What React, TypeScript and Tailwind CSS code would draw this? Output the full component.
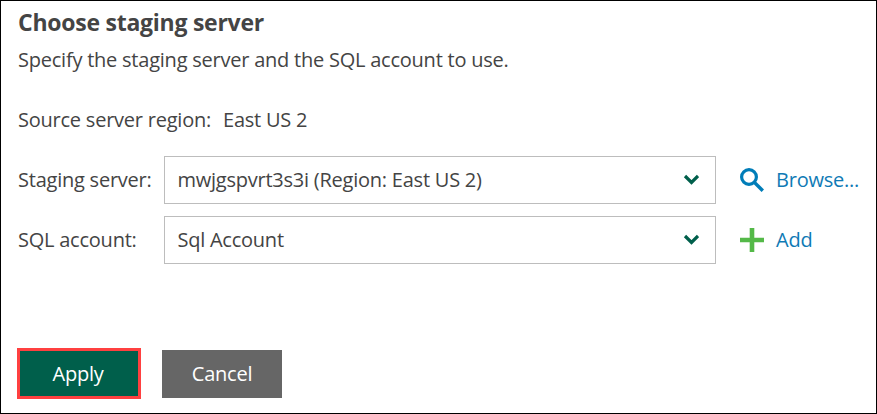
import React from "react";

function Select({ value }: { value: string }) {
  return (
    <button className="flex h-12 w-[552px] items-center justify-between border border-[#bdbdbd] bg-white pl-[12.4px] pr-4 text-left">
      <span>{value}</span>
      <svg width="16" height="12" viewBox="0 0 16 12" fill="none">
        <path d="M2 2 L8.5 8.5 L15 2" stroke="#005f4b" strokeWidth="3.2" />
      </svg>
    </button>
  );
}

export default function App() {
  return (
    <main className="h-[414px] w-[877px] overflow-hidden border border-black bg-white pl-[17px] font-['Open_Sans',sans-serif] text-[20px] leading-[28px] tracking-[-0.23px] text-[#444444]">
      <h1 className="mt-[7px] text-[23px] font-bold leading-[28px] tracking-[-0.25px]">Choose staging server</h1>
      <p className="mt-[10px]">Specify the staging server and the SQL account to use.</p>
      <p className="mt-8 flex gap-3"><span>Source server region:</span><span>East US 2</span></p>
      <div className="mt-[22px] flex items-center">
        <label className="w-[146px]">Staging server:</label>
        <Select value="mwjgspvrt3s3i (Region: East US 2)" />
        <a className="ml-6 flex items-center gap-3 text-[#0f7ab5]">
          <svg width="24" height="24" viewBox="0 0 24 24" fill="none" stroke="#007db8" strokeWidth="3.2">
            <circle cx="9" cy="9" r="7.4" />
            <path d="M14 14 L22.8 22.8" strokeWidth="3.4" />
          </svg>
          Browse...
        </a>
      </div>
      <div className="mt-3 flex items-center">
        <label className="w-[146px]">SQL account:</label>
        <Select value="Sql Account" />
        <a className="ml-6 flex items-center gap-3 text-[#0f7ab5]">
          <svg width="24" height="24" viewBox="0 0 24 24">
            <path d="M12 0V24M0 12H24" stroke="#54b948" strokeWidth="4.6" />
          </svg>
          Add
        </a>
      </div>
      <div className="-ml-px mt-[84px] flex items-start gap-[21px] text-white">
        <button className="h-[51px] w-[124px] border-[3px] border-[#ff4040] bg-[#005f4b] pr-0.5 pt-px">Apply</button>
        <button className="mt-0.5 h-12 w-[120px] bg-[#666666]">Cancel</button>
      </div>
    </main>
  );
}
